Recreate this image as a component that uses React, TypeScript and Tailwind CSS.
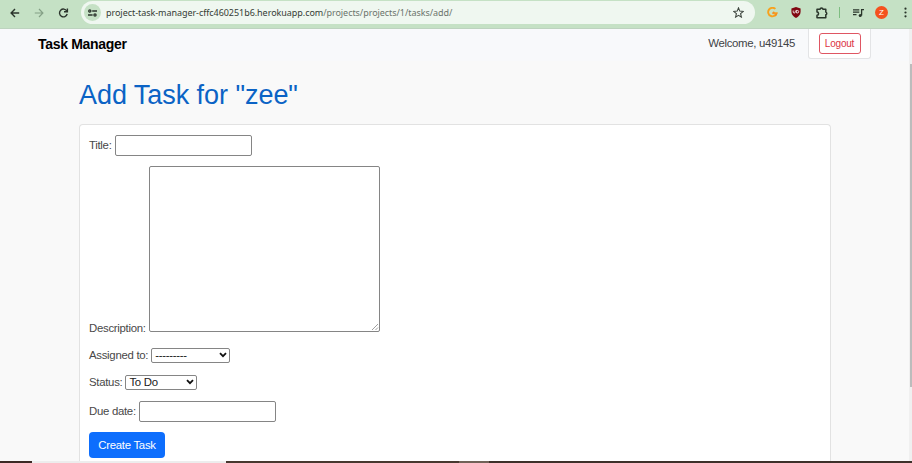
import React from "react";

const sans = "font-['Liberation_Sans',Arial,sans-serif]";

function Chevron() {
  return (
    <svg width="8" height="6" viewBox="0 0 8 6" fill="none" stroke="#111" strokeWidth="1.8">
      <path d="M1 1.2 4 4.2 7 1.2" />
    </svg>
  );
}

function BrowserBar() {
  return (
    <header className="flex h-[29px] shrink-0 items-start border-b border-[#bdd3bf] bg-[#c5e1c5]">
      <div className="flex h-[25px] w-[81px] shrink-0 items-center pl-[10px]">
        <svg width="10" height="10" viewBox="0 0 10 10" fill="none" stroke="#2b342c" strokeWidth="1.4">
          <path d="M9.2 5H1.2M5 1 1.1 5 5 9" />
        </svg>
        <svg className="ml-[14px]" width="10" height="10" viewBox="0 0 10 10" fill="none" stroke="#84a086" strokeWidth="1.2">
          <path d="M.8 5h8M5 1l3.9 4L5 9" />
        </svg>
        <svg className="ml-[14px]" width="11" height="10" viewBox="0 0 11 10" fill="none" stroke="#2b342c" strokeWidth="1.4">
          <path d="M8.8 3A3.9 3.9 0 1 0 9.2 6" />
          <path d="M9.4.4v3.3H6" />
        </svg>
      </div>
      <div className="mt-px flex h-[23px] w-[674px] shrink-0 items-center rounded-full bg-[#eff7f0] pl-[3px]">
        <div className="flex h-[17px] w-[17px] items-center justify-center rounded-full bg-[#c5e1c5]">
          <svg width="9" height="8" viewBox="0 0 9 8" fill="none" stroke="#2b342c" strokeWidth="1.3">
            <circle cx="1.8" cy="2" r="1.1" />
            <path d="M4.2 2H9M0 6h4.6" />
            <circle cx="7" cy="6" r="1.1" />
          </svg>
        </div>
        <div className="ml-[5px] w-[347px] whitespace-nowrap font-['Noto_Sans','Open_Sans',sans-serif] text-[9px] leading-[14px] tracking-[-0.05px] text-[#343b35]">
          project-task-manager-cffc460251b6.herokuapp.com<span className="text-[#6b746c]">/projects/projects/1/tasks/add/</span>
        </div>
        <svg className="ml-auto mr-[11px]" width="11" height="11" viewBox="0 0 11 11" fill="none" stroke="#3f4740" strokeWidth="1.1">
          <path d="m5.5.9 1.3 3.2 3.5.3-2.7 2.3.8 3.4-2.9-1.8-2.9 1.8.8-3.4L.7 4.4l3.5-.3Z" />
        </svg>
      </div>
      <div className="flex h-[25px] flex-1 items-center pl-[12px]">
        <svg width="11" height="11" viewBox="0 0 11 11" fill="none">
          <path d="M8.4 1.9A4.3 4.3 0 1 0 9.6 6.3H6.2" stroke="#f8a11d" strokeWidth="1.9" />
          <path d="M5.4 6.6 7.4 5M9.6 6.2a4.3 4.3 0 0 1-1.5 2.6" stroke="#f58f21" strokeWidth="1.7" />
        </svg>
        <svg className="ml-[13px]" width="10" height="11" viewBox="0 0 10 11" fill="none">
          <path d="M5 0 9.6 1.4v3.4C9.6 8 7.3 9.8 5 11 2.7 9.8.4 8 .4 4.8V1.4Z" fill="#800610" />
          <path d="M2.2 3.5v1.5q0 1 1.1 1 1 0 1-1V3.5M5.6 3v3h.7q1.4 0 1.4-1.3T6.3 3.4h-.7" stroke="#fff" strokeWidth=".8" />
        </svg>
        <svg className="ml-[15px]" width="12" height="12" viewBox="0 0 12 12" fill="none" stroke="#29352a" strokeWidth="1.5" strokeLinejoin="round">
          <path d="M1 2.2h3.1a1.4 1.1 0 0 1 2.8 0h2.9v2.9a1.3 1.4 0 0 1 0 2.7v3H1V8.2a1.5 1.5 0 0 0 0-3.1Z" />
        </svg>
        <div className="ml-[11px] h-[11px] w-px bg-[#7ebd81]" />
        <svg className="ml-[13px]" width="11" height="10" viewBox="0 0 11 10" fill="none" stroke="#29352a" strokeWidth="1.3">
          <path d="M0 1.8h6.3M0 4.2h6.3M0 6.6h3.5M8.6 7.6V1.6H11" />
          <circle cx="7.2" cy="7.6" r="1.5" fill="#29352a" stroke="none" />
        </svg>
        <div className={`${sans} ml-[11px] flex h-[13px] w-[13px] items-center justify-center rounded-full bg-[#f4511e] text-[8px] leading-none text-white`}>
          Z
        </div>
        <svg className="ml-auto mr-[5px]" width="3" height="11" viewBox="0 0 3 11" fill="#29352a">
          <circle cx="1.5" cy="1.7" r="1.1" />
          <circle cx="1.5" cy="5.5" r="1.1" />
          <circle cx="1.5" cy="9.3" r="1.1" />
        </svg>
      </div>
    </header>
  );
}

function Navbar() {
  return (
    <nav className="flex h-[32px] items-start bg-[#f8f9fb] pl-[38px]">
      <div className="mt-[7px] whitespace-nowrap text-[14px] font-bold leading-4 tracking-[-0.3px] text-black">Task Manager</div>
      <div className="ml-auto mt-[6px] whitespace-nowrap text-[11.4px] leading-4 tracking-[-0.32px] text-[#404346]">Welcome, u49145</div>
      <div className="ml-[13px] mr-[38px] flex h-[30px] w-[63px] items-start justify-center rounded-b-[3px] border border-t-0 border-[#e3e4e6] bg-white pt-[4px]">
        <button className="h-[21px] w-[42px] rounded-[3px] border border-[#df5663] bg-white text-[10px] leading-[19px] tracking-[-0.2px] text-[#dc3545]">Logout</button>
      </div>
    </nav>
  );
}

const inputStyle = "rounded-[2px] border border-[#858585] bg-white outline-none";

export default function App() {
  return (
    <div className={`${sans} flex h-[463px] w-[912px] flex-col overflow-hidden bg-[#f9f9f9]`}>
      <BrowserBar />
      <div className="flex h-[432px] shrink-0">
        <div className="flex w-[909px] flex-col">
          <Navbar />
          <main className="flex flex-1 flex-col pl-[79px] pr-[78px] pt-[18px]">
            <h1 className="h-[45px] whitespace-nowrap text-[27px] leading-[32px] tracking-[-0.05px] text-[#0b63c5]">Add Task for "zee"</h1>
            <form className="flex flex-1 flex-col items-start rounded-t-[4px] border border-b-0 border-[#e2e2e2] bg-white pl-[9px] pt-[10px] text-[11.4px] leading-4 tracking-[-0.29px] text-[#484848]">
              <label className="flex items-center gap-[3px]">
                <span className="-mt-[2px]">Title:</span>
                <input className={`${inputStyle} h-[21px] w-[137px]`} />
              </label>
              <label className="mt-[10px] flex items-end gap-[3px]">
                <span className="-mb-[4px]">Description:</span>
                <span className={`${inputStyle} flex h-[166px] w-[231px] items-end justify-end`}>
                  <svg width="7" height="7" viewBox="0 0 7 7" stroke="#777" strokeWidth=".7">
                    <path d="m0 6 6-6M3.5 6 6 3.5" />
                  </svg>
                </span>
              </label>
              <label className="mt-[15px] flex items-center gap-[3px]">
                <span>Assigned to:</span>
                <span className={`${inputStyle} flex h-[15px] w-[79px] items-center justify-between pl-[3px] pr-[2px] text-[#202020]`}>
                  <span>---------</span>
                  <Chevron />
                </span>
              </label>
              <label className="mt-[11px] flex items-center gap-[3px]">
                <span>Status:</span>
                <span className={`${inputStyle} flex h-[15px] w-[72px] items-center justify-between pl-[3px] pr-[2px] text-[#202020]`}>
                  <span>To Do</span>
                  <Chevron />
                </span>
              </label>
              <label className="mt-[11px] flex items-center gap-[3px]">
                <span className="-mt-[2px]">Due date:</span>
                <input className={`${inputStyle} h-[21px] w-[137px]`} />
              </label>
              <button type="button" className="mt-[10px] h-[26px] w-[76px] shrink-0 rounded-[4px] bg-[#0d6efd] text-[11.4px] leading-4 tracking-[-0.27px] text-white">
                Create Task
              </button>
            </form>
          </main>
        </div>
        <div className="w-[3px] bg-[#f0f0f0] pl-px pt-[35px]">
          <div className="h-[323px] w-[2px] bg-[#bcbcbc]" />
        </div>
      </div>
      <div className="flex h-[2px]">
        <div className="w-[32px] bg-[#3c2925]" />
        <div className="w-[194px] bg-[#ededed]" />
        <div className="w-[233px] bg-[#47382f]" />
        <div className="w-[30px] bg-[#716258]" />
        <div className="flex-1 bg-[#3e302a]" />
      </div>
    </div>
  );
}
